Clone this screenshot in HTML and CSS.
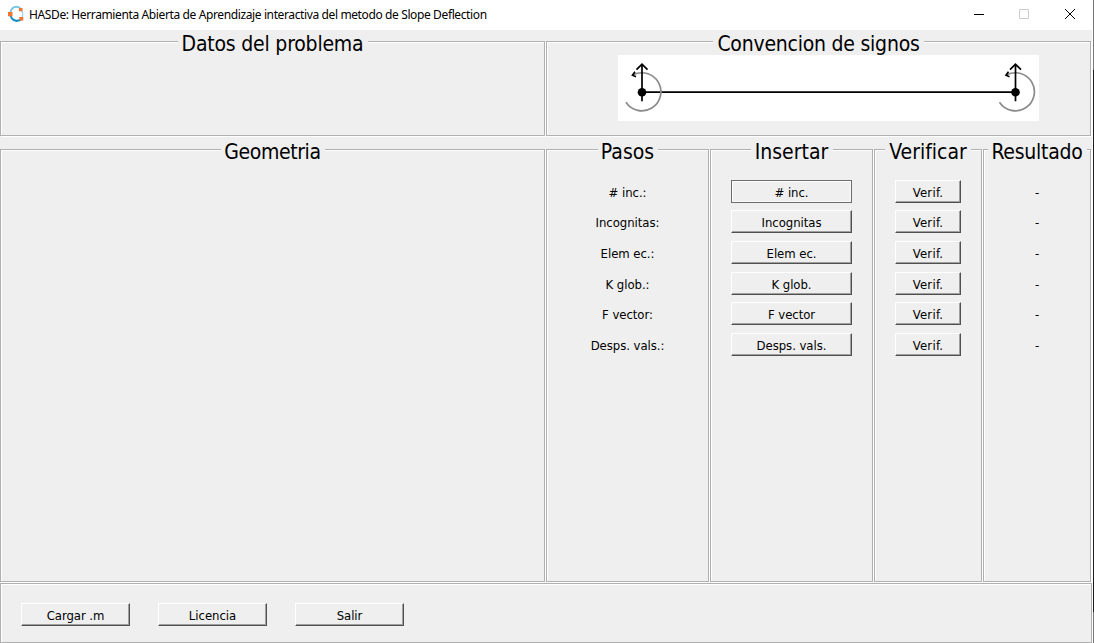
FILE: index.html
```html
<!DOCTYPE html>
<html lang="es">
<head>
<meta charset="utf-8">
<title>HASDe</title>
<link rel="stylesheet" href="styles.css">
</head>
<body>
<div class="window">
  <header class="titlebar">
    <svg class="logo" width="18" height="18" viewBox="0 0 18 18">
      <path d="M3.300 8C4 4 6.500 1.700 9.500 1.700C11.300 1.700 12.800 2.600 14 4" fill="none" stroke="#7cc4e4" stroke-width="1.900"/>
      <path d="M3.300 8C3.300 12 5.500 15.500 9.500 15.800C11.800 15.900 13.200 15.300 14.500 14" fill="none" stroke="#1c93c4" stroke-width="2.300"/>
      <path d="M14 4.500C15.700 6.500 16 9.500 15.200 12.500" fill="none" stroke="#9dd3ea" stroke-width="1.300"/>
      <path d="M1 7h4.500v4.200H1zM12 3h3.500v3.300H12zM12.300 12h4v3.600h-4z" fill="#f37432"/>
    </svg>
    <span class="caption">HASDe: Herramienta Abierta de Aprendizaje interactiva del metodo de Slope Deflection</span>
    <svg class="controls" width="120" height="30" viewBox="0 0 120 30" fill="none">
      <path d="M0 14.500h10" stroke="#000"/>
      <path d="M45.500 9.500h9v9h-9z" stroke="#ccc"/>
      <path d="M91 9l10 10M101 9l-10 10" stroke="#000"/>
    </svg>
  </header>
  <main class="content">
    <div class="top-row">
      <section class="panel"><h2 class="legend legend-datos"><span>Datos del problema</span></h2></section>
      <section class="panel"><h2 class="legend legend-signos"><span>Convencion de signos</span></h2>
        <svg class="diagram" width="421" height="66" viewBox="0 0 421 66" fill="none">
          <defs>
            <g id="node">
              <path d="M-9 -17.200A19 19 0 1 1 -16 10" stroke="#8b8b8b" stroke-width="1.700"/>
              <path d="M-7 -20.500L-9.500 -17L-6 -15.500" stroke="#000" stroke-width="1.700"/>
              <path d="M0 9V-27.500M-5.500 -22.500L0 -28L5.500 -22.500" stroke="#000" stroke-width="1.700"/>
              <circle r="4.300" fill="#000"/>
            </g>
          </defs>
          <path d="M24 37.200H397.500" stroke="#000" stroke-width="1.700"/>
          <use href="#node" x="24" y="37.200"/>
          <use href="#node" x="397.500" y="37.200"/>
        </svg>
      </section>
    </div>
    <div class="main-row">
      <section class="panel"><h2 class="legend legend-geo"><span>Geometria</span></h2></section>
      <section class="panel"><h2 class="legend legend-pasos"><span>Pasos</span></h2>
        <div class="rows rows-text"><span># inc.:</span><span>Incognitas:</span><span>Elem ec.:</span><span>K glob.:</span><span>F vector:</span><span>Desps. vals.:</span></div>
      </section>
      <section class="panel"><h2 class="legend legend-insertar"><span>Insertar</span></h2>
        <div class="rows rows-insertar"><button class="btn focused"># inc.</button><button class="btn">Incognitas</button><button class="btn">Elem ec.</button><button class="btn">K glob.</button><button class="btn">F vector</button><button class="btn">Desps. vals.</button></div>
      </section>
      <section class="panel"><h2 class="legend legend-verificar"><span>Verificar</span></h2>
        <div class="rows rows-verificar"><button class="btn">Verif.</button><button class="btn">Verif.</button><button class="btn">Verif.</button><button class="btn">Verif.</button><button class="btn">Verif.</button><button class="btn">Verif.</button></div>
      </section>
      <section class="panel"><h2 class="legend legend-resultado"><span>Resultado</span></h2>
        <div class="rows"><span>-</span><span>-</span><span>-</span><span>-</span><span>-</span><span>-</span></div>
      </section>
    </div>
    <footer class="panel actions"><button class="btn">Cargar .m</button><button class="btn">Licencia</button><button class="btn">Salir</button></footer>
  </main>
</div>
</body>
</html>
```
FILE: styles.css
```css
* { box-sizing: border-box; }
body {
  margin: 0;
  width: 1094px;
  height: 643px;
  overflow: hidden;
  background: linear-gradient(#777 0 70px, #1c1c1c 70px 612px, #777 612px);
  font-family: "DejaVu Sans Condensed", "DejaVu Sans", sans-serif;
  font-stretch: condensed;
  font-size: 13px;
  letter-spacing: -0.05px;
  color: #000;
}
.window { width: 1093px; height: 643px; background: #fff; }
.titlebar { display: flex; align-items: center; height: 30px; padding-left: 7px; background: #fff; }
.logo { margin-top: -2px; }
.caption { margin-left: 4px; font: 12px/30px "Noto Sans", sans-serif; letter-spacing: -0.38px; white-space: nowrap; }
.controls { margin-left: auto; margin-right: -1px; }
.content { width: 1092px; height: 613px; padding-top: 11px; background: #efefef; }
.top-row { display: grid; grid-template-columns: 546px 546px; height: 108px; }
.top-row .panel { height: 95px; }
.main-row { display: grid; grid-template-columns: 546px 164px 164px 109px 109px; height: 434px; }
.main-row .panel { height: 433px; }
.panel {
  margin-right: 1px;
  border: 1px solid #b0b0b0;
  box-shadow: inset 1px 1px #fff, 1px 1px #fff;
}
.legend {
  display: flex;
  justify-content: center;
  height: 24px;
  margin: -11px auto 0;
  background: #efefef;
  font-size: 21px;
  font-weight: 400;
  line-height: 27px;
  letter-spacing: 0;
  white-space: nowrap;
}
.legend-datos { width: 190px; letter-spacing: -0.2px; }
.legend-signos { width: 211px; letter-spacing: -0.23px; }
.legend-geo { width: 104px; letter-spacing: -0.4px; }
.legend-pasos { width: 60px; }
.legend-insertar { width: 82px; }
.legend-verificar { width: 86px; }
.legend-resultado { width: 99px; letter-spacing: -0.25px; }
.diagram { display: block; margin: 0 0 0 71px; background: #fff; }
.rows {
  display: grid;
  grid-template-rows: 30px 31px 31px 30px 31px 23px;
  justify-items: center;
  margin-top: 17px;
  line-height: 25px;
}
.rows-text { line-height: 26px; }
.rows-insertar { width: 121px; margin-left: 20px; }
.rows-verificar { width: 66px; margin-left: 20px; }
.btn {
  width: 100%;
  height: 23px;
  padding: 2px 0 0;
  border: 1px solid;
  border-color: #fff #505050 #505050 #fff;
  background: #efefef;
  box-shadow: inset -1px -1px #a0a0a0;
  color: #000;
  font: inherit;
  line-height: 18px;
  letter-spacing: inherit;
  text-align: center;
}
.btn.focused { border-color: #6c6c6c; box-shadow: inset 1px 1px #fff, inset -1px -1px #f8f8f8; }
.rows-verificar .btn { letter-spacing: 0.25px; }
.actions { display: flex; gap: 28px; width: 1092px; height: 60px; margin: 0; padding: 19px 0 0 20px; }
.actions .btn { width: 109px; }
```
